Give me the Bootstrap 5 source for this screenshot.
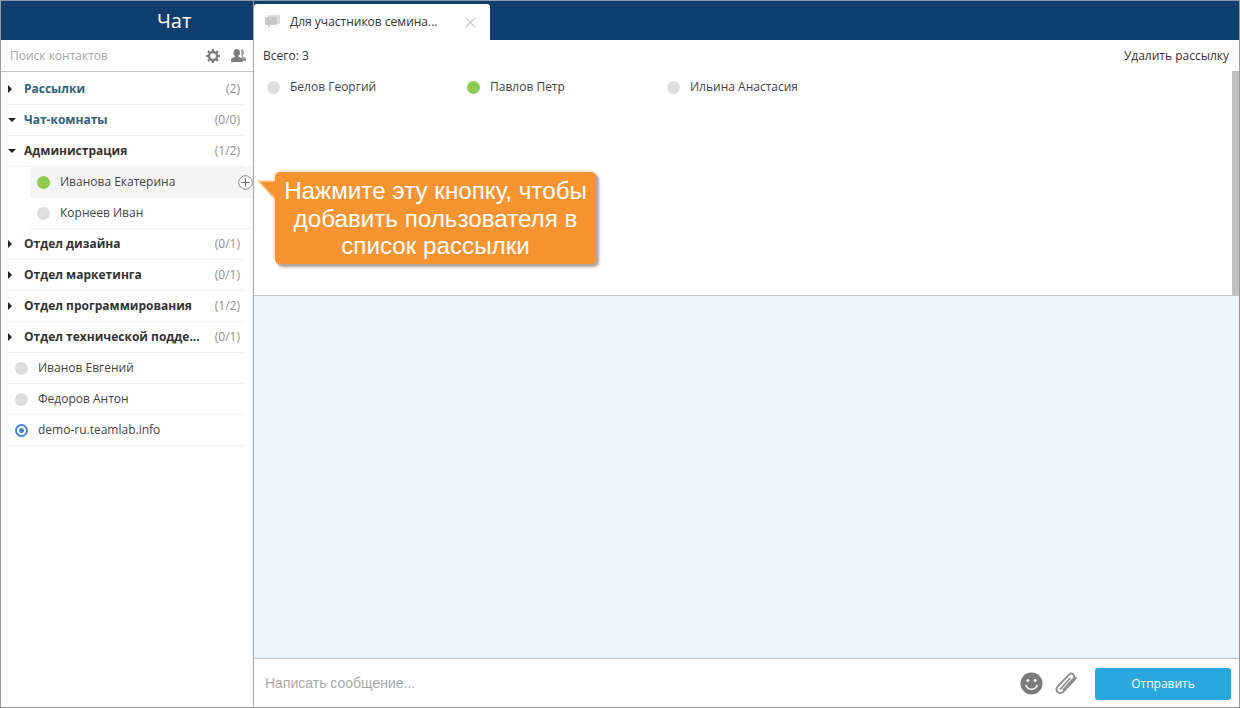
<!DOCTYPE html>
<html lang="ru">
<head>
<meta charset="utf-8">
<title>Чат</title>
<link href="https://cdn.jsdelivr.net/npm/bootstrap@5.3.0/dist/css/bootstrap.min.css" rel="stylesheet">
<style>
html,body{height:100%;margin:0;overflow:hidden}
body{font-family:"Open Sans","Noto Sans",sans-serif;font-size:12px;color:#333;background:#fff}
.frame{width:1240px;height:708px;border:1px solid #9a9a9a;border-top-color:#8d98a5}
.side{width:253px;flex:none;border-right:1px solid #a9a9a9}
.side-title{height:39px;background:#0f3e6f;color:#fff;font-size:20px;line-height:39px;padding-left:156px}
.search{height:32px;border-bottom:1px solid #c4c4c4;padding:0 7px 0 9px;color:#a6a6a6}
.rows{padding:2px 8px 0 7px}
.row-item{height:31px;border-bottom:1px solid #f1f1f1;padding-right:5px;color:#444}
.row-item .caret-r{width:0;height:0;border-left:4px solid #222;border-top:4px solid transparent;border-bottom:4px solid transparent;margin:0 12px 0 0;flex:none}
.row-item .caret-d{width:0;height:0;border-top:4px solid #222;border-left:4px solid transparent;border-right:4px solid transparent;margin:0 8px 0 0;flex:none}
.group-name{font-weight:700;color:#333;white-space:nowrap}
.group-name.teal{color:#2c6379}
.count{color:#8f8f8f;margin-left:auto;font-size:12px}
.dot{width:13px;height:13px;border-radius:50%;background:#dedede;flex:none;display:block}
.dot.on{background:#8cc94f}
.dot.self{background:#fff;border:2px solid #4385d6;position:relative}
.dot.self::after{content:"";position:absolute;inset:2px;border-radius:50%;background:#4385d6}
.person{padding-left:7px;gap:10px}
.sub{margin-left:22px;padding-left:7px;margin-right:-8px;padding-right:0;gap:10px}
.sub.hover{background:#f5f5f5;border-bottom-color:#f5f5f5;position:relative}
.plus{position:absolute;right:0;top:8px;width:15px;height:15px}
.topbar{height:39px;background:#0f3e6f}
.tab{width:236px;height:36px;background:#fff;margin-top:3px;border-radius:3px 3px 0 0;padding:0 14px 0 11px;color:#333}
.tab-x{margin-left:auto;color:#c9c9c9;width:11px;height:11px}
.recipients{height:256px;border-bottom:1px solid #c4c4c4;position:relative}
.rec-head{padding:7px 10px 0 9px;height:32px;color:#333}
.rec-list{padding:0 0 0 13px}
.rec{width:200px;gap:10px;height:30px;color:#444}
.scrollthumb{position:absolute;right:0;top:31px;width:7px;bottom:0;background:#c0c0c0}
.msgs{flex:1 1 auto;background:#ebf5fd;border-bottom:1px solid #c4c4c4}
.composer{height:48px;padding:1px 8px 0 11px;color:#a9a9a9;font-family:"Liberation Sans",Arial,sans-serif;font-size:14px}
.send{width:136px;height:32px;background:#2ca7dd;color:#fff;border:0;border-radius:3px;font-family:"Open Sans",sans-serif;font-size:12px;padding:0}
.send:hover{background:#2ca7dd;color:#fff}
.callout{position:absolute;left:274px;top:171px;width:321px;height:92px;background:#f59430;border-radius:5px;color:#fff;font-family:"Liberation Sans",Arial,sans-serif;font-size:24.2px;line-height:27.5px;text-align:center;padding:5px 0 0;white-space:nowrap;box-shadow:2px 2px 1px #b0a89c,3px 3px 3px rgba(90,80,60,.5),-1px -1px 3px rgba(245,170,90,.45)}
.callout-tail{position:absolute;left:-18px;top:8px;width:20px;height:21px;overflow:visible}
.shell{position:relative}
</style>
</head>
<body>
<div class="frame d-flex shell">
  <aside class="side d-flex flex-column">
    <div class="side-title">Чат</div>
    <div class="search d-flex align-items-center">
      <span>Поиск контактов</span>
      <svg class="ms-auto" width="14" height="14" viewBox="0 0 14 14" fill="none" stroke="#7d7d7d"><circle cx="7" cy="7" r="4" stroke-width="2.300"/><path stroke-width="2.200" d="M7 0v3M7 11v3M0 7h3M11 7h3M2 2l2 2M10 10l2 2M12 2l-2 2M4 10l-2 2"/></svg>
      <svg style="margin-left:11px" width="15" height="13" viewBox="0 0 15 13"><path fill="#9a9a9a" d="M10 .3c1.800 0 2.900 1.300 2.900 3.100 0 1.300-.5 2.400-1.200 3v1c1.300.6 3.300 1.100 3.300 2.700V12h-4z"/><path fill="#7d7d7d" d="M5.800 0C7.700 0 9 1.400 9 3.400c0 1.400-.5 2.600-1.300 3.200v1.300c1.700.7 3.800 1.200 3.800 3V13H0v-2.100c0-1.800 2.100-2.300 3.800-3V6.600C3 6 2.500 4.800 2.500 3.400 2.500 1.400 3.900 0 5.800 0z"/></svg>
    </div>
    <div class="rows">
      <div class="row-item d-flex align-items-center"><i class="caret-r"></i><span class="group-name teal">Рассылки</span><span class="count">(2)</span></div>
      <div class="row-item d-flex align-items-center"><i class="caret-d"></i><span class="group-name teal">Чат-комнаты</span><span class="count">(0/0)</span></div>
      <div class="row-item d-flex align-items-center"><i class="caret-d"></i><span class="group-name">Администрация</span><span class="count">(1/2)</span></div>
      <div class="row-item sub hover d-flex align-items-center"><span class="dot on"></span><span>Иванова Екатерина</span>
        <svg class="plus" viewBox="0 0 15 15"><circle cx="7.500" cy="7.500" r="6.800" fill="#fff" stroke="#8a8a8a"/><path d="M7.500 3.500v8M3.500 7.500h8" stroke="#666" fill="none"/></svg>
      </div>
      <div class="row-item sub d-flex align-items-center"><span class="dot"></span><span>Корнеев Иван</span></div>
      <div class="row-item d-flex align-items-center"><i class="caret-r"></i><span class="group-name">Отдел дизайна</span><span class="count">(0/1)</span></div>
      <div class="row-item d-flex align-items-center"><i class="caret-r"></i><span class="group-name">Отдел маркетинга</span><span class="count">(0/1)</span></div>
      <div class="row-item d-flex align-items-center"><i class="caret-r"></i><span class="group-name">Отдел программирования</span><span class="count">(1/2)</span></div>
      <div class="row-item d-flex align-items-center"><i class="caret-r"></i><span class="group-name">Отдел технической подде...</span><span class="count">(0/1)</span></div>
      <div class="row-item person d-flex align-items-center"><span class="dot"></span><span>Иванов Евгений</span></div>
      <div class="row-item person d-flex align-items-center"><span class="dot"></span><span>Федоров Антон</span></div>
      <div class="row-item person d-flex align-items-center"><span class="dot self"></span><span>demo-ru.teamlab.info</span></div>
    </div>
  </aside>
  <main class="flex-grow-1 d-flex flex-column">
    <div class="topbar d-flex">
      <div class="tab d-flex align-items-center">
        <svg width="15" height="14" viewBox="0 0 15 14" class="flex-none" style="margin-right:10px"><path fill="#dcdcdc" d="M3 0h11a1 1 0 0 1 1 1v7a1 1 0 0 1-1 1h-2V2H3z"/><path fill="#c8c8c8" d="M1 2h10a1 1 0 0 1 1 1v6a1 1 0 0 1-1 1H6l-3 3v-3H1a1 1 0 0 1-1-1V3a1 1 0 0 1 1-1z"/></svg>
        <span>Для участников семина...</span>
        <svg class="tab-x" viewBox="0 0 11 11"><path d="M1 1l9 9M10 1l-9 9" stroke="#c9c9c9" stroke-width="1.200" fill="none"/></svg>
      </div>
    </div>
    <section class="recipients">
      <div class="rec-head d-flex justify-content-between"><span>Всего: 3</span><span>Удалить рассылку</span></div>
      <div class="rec-list d-flex">
        <div class="rec d-flex align-items-center"><span class="dot"></span><span>Белов Георгий</span></div>
        <div class="rec d-flex align-items-center"><span class="dot on"></span><span>Павлов Петр</span></div>
        <div class="rec d-flex align-items-center"><span class="dot"></span><span>Ильина Анастасия</span></div>
      </div>
      <div class="scrollthumb"></div>
    </section>
    <section class="msgs"></section>
    <div class="composer d-flex align-items-center">
      <span>Написать сообщение...</span>
      <svg class="ms-auto" width="23" height="23" viewBox="0 0 23 23"><circle cx="11.500" cy="11.500" r="11" fill="#7b7b7b"/><circle cx="7.800" cy="8.500" r="1.500" fill="#fff"/><circle cx="15.200" cy="8.500" r="1.500" fill="#fff"/><path d="M6 13.500c1.200 2.600 3.200 3.800 5.500 3.800s4.300-1.200 5.500-3.800" stroke="#fff" stroke-width="1.600" fill="none" stroke-linecap="round"/></svg>
      <svg style="margin:0 16px 0 12px" width="24" height="24" viewBox="0 0 24 24" fill="none" stroke="#8c8c8c" stroke-width="1.800" stroke-linecap="round" stroke-linejoin="round"><path d="M8.500 17.500L18.500 6.500c1.200-1.400 1-3.200-.1-4.200s-2.900-1-4.200.3L3 14c-1.800 2-1.800 4.500-.3 6s4 1.600 5.800-.3L19 8.500c1-1 1.500-1.800 2-2.500"/><path d="M5.500 17l9.500-10.500"/></svg>
      <button class="btn send" type="button">Отправить</button>
    </div>
  </main>
  <div class="callout">
    <svg class="callout-tail" viewBox="0 0 20 21"><path d="M1 1H20V20H18z" fill="#f59430"/><path d="M17 1H1L18 19" fill="none" stroke="#f8d0a4" stroke-width="1.300"/></svg>
    Нажмите эту кнопку, чтобы<br>добавить пользователя в<br>список рассылки
  </div>
</div>
</body>
</html>
